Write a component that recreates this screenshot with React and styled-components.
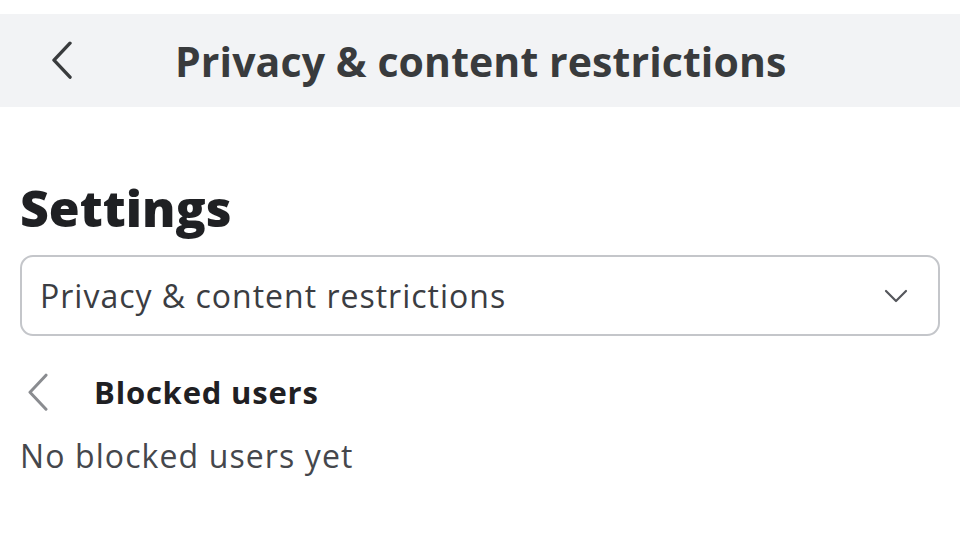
import React from "react";
import styled, { createGlobalStyle } from "styled-components";

const GlobalStyle = createGlobalStyle`
  html, body {
    margin: 0;
    padding: 0;
    background: #fff;
    font-family: "Open Sans", "Noto Sans", sans-serif;
  }
`;

const Page = styled.div`
  width: 960px;
  height: 534px;
  padding-top: 14px;
  box-sizing: border-box;
  background: #fff;
`;

const TopBar = styled.div`
  height: 93px;
  background: #f2f3f5;
  display: flex;
  align-items: center;
  padding-left: 44px;
  box-sizing: border-box;
`;

const BackButton = styled.div`
  width: 36px;
  height: 44px;
  display: flex;
  align-items: center;
  justify-content: center;
  color: ${(p) => p.color || "#393b3d"};
`;

const TopTitle = styled.h1`
  margin: 0 0 0 95px;
  font-size: 41px;
  font-weight: 700;
  color: #393b3d;
  letter-spacing: 0.1px;
`;

const Content = styled.div`
  padding: 72px 20px 0;
  display: flex;
  flex-direction: column;
`;

const Heading = styled.h2`
  margin: 0;
  font-size: 50px;
  line-height: 58px;
  font-weight: 800;
  color: #1f2023;
`;

const Select = styled.div`
  margin-top: 18px;
  height: 81px;
  border: 2px solid #c4c6ca;
  border-radius: 13px;
  box-sizing: border-box;
  display: flex;
  align-items: center;
  justify-content: space-between;
  padding: 0 30px 0 18px;
  font-size: 32px;
  letter-spacing: 1px;
  color: #3b3d42;
`;

const SectionRow = styled.div`
  margin-top: 34px;
  display: flex;
  align-items: center;
  gap: 38px;
`;

const SectionTitle = styled.div`
  font-size: 31px;
  font-weight: 700;
  letter-spacing: 0.8px;
  color: #1f2023;
`;

const EmptyText = styled.div`
  margin-top: 20px;
  font-size: 32px;
  letter-spacing: 1.1px;
  color: #45474c;
`;

const Chevron = ({ size = 24, stroke = 3 }) => (
  <svg width={size} height={size * 1.6} viewBox="0 0 24 38" fill="none">
    <path d="M20 2 L4 19 L20 36" stroke="currentColor" strokeWidth={stroke} strokeLinecap="round" strokeLinejoin="round" />
  </svg>
);

const ChevronDown = () => (
  <svg width="24" height="14" viewBox="0 0 24 14" fill="none">
    <path d="M2 2 L12 12 L22 2" stroke="#55575c" strokeWidth="2.2" strokeLinecap="round" strokeLinejoin="round" />
  </svg>
);

export default function App() {
  return (
    <Page>
      <GlobalStyle />
      <TopBar>
        <BackButton>
          <Chevron size={24} stroke={3.4} />
        </BackButton>
        <TopTitle>Privacy &amp; content restrictions</TopTitle>
      </TopBar>
      <Content>
        <Heading>Settings</Heading>
        <Select>
          <span>Privacy &amp; content restrictions</span>
          <ChevronDown />
        </Select>
        <SectionRow>
          <BackButton color="#8a8c90">
            <Chevron size={24} stroke={3} />
          </BackButton>
          <SectionTitle>Blocked users</SectionTitle>
        </SectionRow>
        <EmptyText>No blocked users yet</EmptyText>
      </Content>
    </Page>
  );
}
